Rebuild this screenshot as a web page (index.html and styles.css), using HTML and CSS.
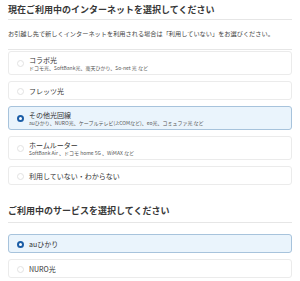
FILE: index.html
```html
<!doctype html>
<html lang="ja">
<head>
    <meta charset="UTF-8">
    <title>インターネット選択</title>
    <link rel="stylesheet" href="styles.css">
</head>
<body>
<div class="page">
    <h1 class="title">現在ご利用中のインターネットを選択してください</h1>
    <p class="note">お引越し先で新しくインターネットを利用される場合は「利用していない」をお選びください。</p>
    <div class="options first">
        <label class="card">
            <span class="radio"></span>
            <span class="text">
                <span class="name">コラボ光</span>
                <span class="sub">ドコモ光、SoftBank光、楽天ひかり、So-net 光 など</span>
            </span>
        </label>
        <label class="card">
            <span class="radio"></span>
            <span class="text"><span class="name">フレッツ光</span></span>
        </label>
        <label class="card on">
            <span class="radio"></span>
            <span class="text">
                <span class="name">その他光回線</span>
                <span class="sub">auひかり、NURO光、ケーブルテレビ(J:COMなど)、eo光、コミュファ光 など</span>
            </span>
        </label>
        <label class="card">
            <span class="radio"></span>
            <span class="text">
                <span class="name">ホームルーター</span>
                <span class="sub">SoftBank Air 、ドコモ home 5G 、WiMAX など</span>
            </span>
        </label>
        <label class="card">
            <span class="radio"></span>
            <span class="text"><span class="name">利用していない・わからない</span></span>
        </label>
    </div>

    <h2 class="title second">ご利用中のサービスを選択してください</h2>
    <div class="options">
        <label class="card on">
            <span class="radio"></span>
            <span class="text"><span class="name">auひかり</span></span>
        </label>
        <label class="card">
            <span class="radio"></span>
            <span class="text"><span class="name">NURO光</span></span>
        </label>
    </div>
</div>
</body>
</html>
```

FILE: styles.css
```css
* { margin: 0; padding: 0; box-sizing: border-box; }
body { background: #fff; color: #333; font-family: "Noto Sans CJK JP", "Noto Sans", sans-serif; }
.page { padding: 3px 8px 0; }

.title { font-size: 9px; line-height: 13px; font-weight: bold; color: #383838; padding-bottom: 3px; border-bottom: 1px solid #e6e6e6; }
.title.second { margin-top: 19px; padding-bottom: 5px; }

.note { font-size: 6.2px; line-height: 9px; color: #444; padding: 9px 0 11px; border-bottom: 1px solid #e6e6e6; }

.options { display: flex; flex-direction: column; gap: 6px; margin-top: 11px; }
.options.first { margin-top: 1px; }

.card { display: flex; align-items: center; gap: 5px; padding: 4px 8px 3px; border: 1px solid #ebebeb; border-radius: 3px; background: #fff; cursor: pointer; }
.card .radio { width: 7px; height: 7px; border-radius: 50%; border: 1px solid #e2e2e2; background: #fff; flex: none; }
.card .text { display: flex; flex-direction: column; }
.card .name { font-size: 7px; line-height: 10px; color: #333; }
.card .name:not(:only-child) { line-height: 9px; }
.card .sub { font-size: 5px; line-height: 6px; color: #555; }

.card.on { background: #eaf4fc; border-color: #a7c3dc; }
.card.on .radio { border: 2px solid #1b5da6; }
```
